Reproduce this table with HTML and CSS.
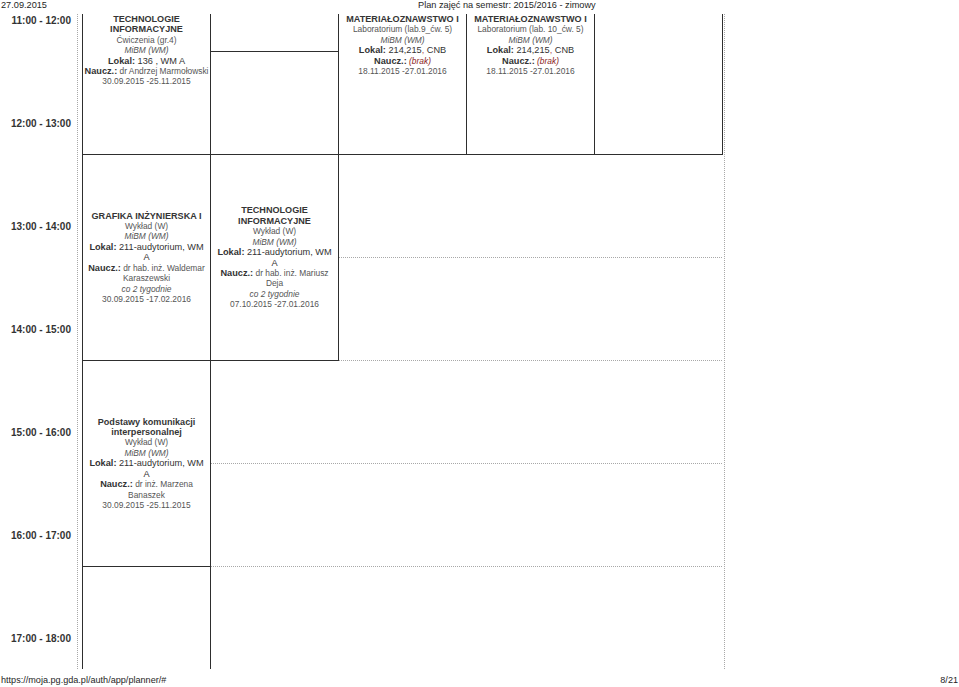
FILE: index.html
```html
<!DOCTYPE html>
<html lang="pl">
<head>
<meta charset="utf-8">
<title>Plan zajęć</title>
<link rel="stylesheet" href="styles.css">
</head>
<body>
<header class="print-head">
  <span class="print-date">27.09.2015</span>
  <span class="print-title">Plan zajęć na semestr: 2015/2016 - zimowy</span>
</header>

<main class="planner">
  <div class="hours">
    <div class="hour">11:00 - 12:00</div>
    <div class="hour">12:00 - 13:00</div>
    <div class="hour">13:00 - 14:00</div>
    <div class="hour">14:00 - 15:00</div>
    <div class="hour">15:00 - 16:00</div>
    <div class="hour">16:00 - 17:00</div>
    <div class="hour">17:00 - 18:00</div>
  </div>

  <div class="day">
    <div class="slot s1"></div>
    <div class="slot s2"></div>
    <div class="slot s3"></div>
    <div class="slot s4"></div>
    <div class="slot s5"></div>
    <div class="slot s6"></div>

    <div class="event col-1 rows-1-2 cut-top">
      <div class="ln t">TECHNOLOGIE</div>
      <div class="ln t">INFORMACYJNE</div>
      <div class="ln s">Ćwiczenia (gr.4)</div>
      <div class="ln s i">MiBM (WM)</div>
      <div class="ln lok"><b>Lokal:</b> 136 , WM A</div>
      <div class="ln nau"><b>Naucz.:</b> dr Andrzej Marmołowski</div>
      <div class="ln s">30.09.2015 -25.11.2015</div>
    </div>

    <div class="event col-2 rows-1 cut-top"></div>

    <div class="event col-3 rows-1-2 cut-top">
      <div class="ln t">MATERIAŁOZNAWSTWO I</div>
      <div class="ln s">Laboratorium (lab.9_ćw. 5)</div>
      <div class="ln s i">MiBM (WM)</div>
      <div class="ln lok"><b>Lokal:</b> 214,215<span class="sep">,</span> CNB</div>
      <div class="ln nau"><b>Naucz.:</b> <span class="brak">(brak)</span></div>
      <div class="ln s">18.11.2015 -27.01.2016</div>
    </div>

    <div class="event col-4 rows-1-2 cut-top">
      <div class="ln t">MATERIAŁOZNAWSTWO I</div>
      <div class="ln s">Laboratorium (lab. 10_ćw. 5)</div>
      <div class="ln s i">MiBM (WM)</div>
      <div class="ln lok"><b>Lokal:</b> 214,215<span class="sep">,</span> CNB</div>
      <div class="ln nau"><b>Naucz.:</b> <span class="brak">(brak)</span></div>
      <div class="ln s">18.11.2015 -27.01.2016</div>
    </div>

    <div class="event col-5 rows-1-2 cut-top"></div>

    <div class="event col-1 rows-3-4">
      <div class="ln t">GRAFIKA INŻYNIERSKA I</div>
      <div class="ln s">Wykład (W)</div>
      <div class="ln s i">MiBM (WM)</div>
      <div class="ln lok"><b>Lokal:</b> 211-audytorium, WM</div>
      <div class="ln lok">A</div>
      <div class="ln nau"><b>Naucz.:</b> dr hab. inż. Waldemar</div>
      <div class="ln s">Karaszewski</div>
      <div class="ln s i">co 2 tygodnie</div>
      <div class="ln s">30.09.2015 -17.02.2016</div>
    </div>

    <div class="event col-2 rows-3-4">
      <div class="ln t">TECHNOLOGIE</div>
      <div class="ln t">INFORMACYJNE</div>
      <div class="ln s">Wykład (W)</div>
      <div class="ln s i">MiBM (WM)</div>
      <div class="ln lok"><b>Lokal:</b> 211-audytorium, WM</div>
      <div class="ln lok">A</div>
      <div class="ln nau"><b>Naucz.:</b> dr hab. inż. Mariusz</div>
      <div class="ln s">Deja</div>
      <div class="ln s i">co 2 tygodnie</div>
      <div class="ln s">07.10.2015 -27.01.2016</div>
    </div>

    <div class="event col-1 rows-5-6">
      <div class="ln t">Podstawy komunikacji</div>
      <div class="ln t">interpersonalnej</div>
      <div class="ln s">Wykład (W)</div>
      <div class="ln s i">MiBM (WM)</div>
      <div class="ln lok"><b>Lokal:</b> 211-audytorium, WM</div>
      <div class="ln lok">A</div>
      <div class="ln nau"><b>Naucz.:</b> dr inż. Marzena</div>
      <div class="ln s">Banaszek</div>
      <div class="ln s">30.09.2015 -25.11.2015</div>
    </div>

    <div class="event col-1 rows-7 cut-bottom"></div>
  </div>
</main>

<footer class="print-foot">
  <span>https://moja.pg.gda.pl/auth/app/planner/#</span>
  <span>8/21</span>
</footer>
</body>
</html>
```

FILE: styles.css
```css
* {
  box-sizing: border-box;
}

html,
body {
  margin: 0;
  padding: 0;
  background: #fff;
}

body {
  width: 959px;
  height: 687px;
  overflow: hidden;
  font-family: "Liberation Sans", Arial, sans-serif;
  color: #1e1e1e;
}

/* print header / footer */
.print-head {
  display: grid;
  grid-template-columns: 417px auto;
  height: 14px;
  padding-left: 1px;
  font-size: 9.2px;
  line-height: 10px;
  white-space: nowrap;
}

.print-foot {
  display: flex;
  justify-content: space-between;
  margin-top: 6px;
  padding: 0 1px;
  font-size: 9.1px;
  line-height: 10px;
  white-space: nowrap;
}

/* planner */
.planner {
  display: grid;
  grid-template-columns: 77px 648px;
  height: 655px;
  overflow: hidden;
}

.hours {
  display: grid;
  grid-template-rows: 37px repeat(6, 103px);
}

.hour {
  display: flex;
  align-items: flex-end;
  justify-content: flex-end;
  padding: 0 6px 24px 0;
  font-size: 10px;
  line-height: 12px;
  font-weight: bold;
  color: #333;
  white-space: nowrap;
}

.day {
  display: grid;
  grid-template-columns: repeat(5, 128px);
  grid-template-rows: 37px repeat(6, 103px);
  width: 648px;
  padding: 0 2px 0 4px;
  border-left: 1px dotted #a8a8a8;
  border-right: 1px dotted #a8a8a8;
}

.slot {
  grid-column: 1 / -1;
  border-bottom: 1px dotted #a8a8a8;
  margin-bottom: -1px;
}

.s1 { grid-row: 1; }
.s2 { grid-row: 2; }
.s3 { grid-row: 3; }
.s4 { grid-row: 4; }
.s5 { grid-row: 5; }
.s6 { grid-row: 6; }

/* events */
.event {
  position: relative;
  z-index: 1;
  display: flex;
  flex-direction: column;
  align-items: center;
  justify-content: center;
  margin: 0 -1px -1px 0;
  background: #fff;
  border: 1px solid #2e2e2e;
  text-align: center;
  line-height: 10.4px;
}

.event.cut-top {
  border-top: none;
  justify-content: flex-start;
}

.event.cut-bottom {
  border-bottom: none;
}

.col-1 { grid-column: 1; }
.col-2 { grid-column: 2; }
.col-3 { grid-column: 3; }
.col-4 { grid-column: 4; }
.col-5 { grid-column: 5; }

.rows-1 { grid-row: 1 / 2; }
.rows-1-2 { grid-row: 1 / 3; }
.rows-3-4 { grid-row: 3 / 5; }
.rows-5-6 { grid-row: 5 / 7; }
.rows-7 { grid-row: 7 / 8; }

.ln {
  white-space: nowrap;
}

.t {
  font-size: 9.1px;
  font-weight: bold;
  color: #353535;
}

.s {
  font-size: 8.4px;
  color: #555;
}

.i {
  font-style: italic;
}

.lok {
  font-size: 9.2px;
  color: #333;
}

.lok b,
.nau b {
  font-weight: bold;
  color: #333;
}

.nau {
  font-size: 8.4px;
  color: #555;
}

.nau b {
  font-size: 9.2px;
}

.brak {
  font-style: italic;
  color: #8a1c1c;
}

.sep {
  color: #b04a4a;
}
```
